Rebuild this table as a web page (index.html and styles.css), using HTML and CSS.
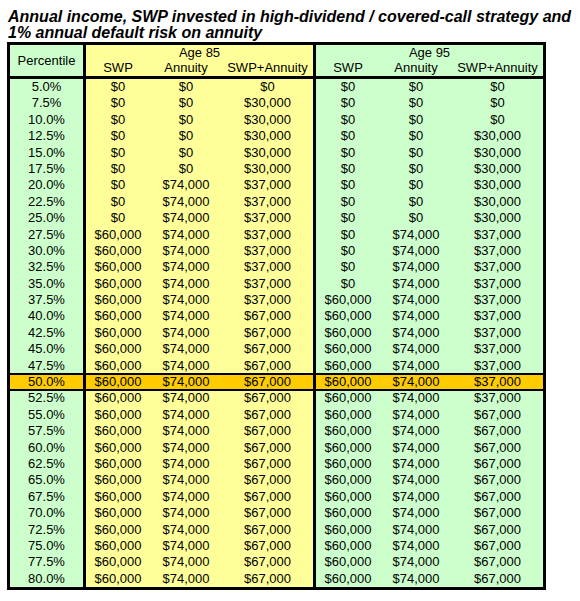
FILE: index.html
```html
<!DOCTYPE html>
<html>
<head>
<meta charset="utf-8">
<link rel="stylesheet" href="styles.css">
</head>
<body>
<h1 class="title"><span class="tl">Annual income, SWP invested in high-dividend / covered-call strategy and</span><span class="tl">1% annual default risk on annuity</span></h1>
<div class="sheet">
  <div class="head">
    <div class="c pct hpct">Percentile</div>
    <div class="group g85">
      <div class="gtitle">Age 85</div>
      <div class="sub"><span class="w1">SWP</span><span class="w2">Annuity</span><span class="w3">SWP+Annuity</span></div>
    </div>
    <div class="group g95">
      <div class="gtitle">Age 95</div>
      <div class="sub"><span class="w1">SWP</span><span class="w2">Annuity</span><span class="w3">SWP+Annuity</span></div>
    </div>
  </div>
  <div class="body">
    <div class="row"><span class="c pct">5.0%</span><span class="c y s1">$0</span><span class="c y">$0</span><span class="c y">$0</span><span class="c g s1">$0</span><span class="c g">$0</span><span class="c g">$0</span></div>
    <div class="row"><span class="c pct">7.5%</span><span class="c y s1">$0</span><span class="c y">$0</span><span class="c y">$30,000</span><span class="c g s1">$0</span><span class="c g">$0</span><span class="c g">$0</span></div>
    <div class="row"><span class="c pct">10.0%</span><span class="c y s1">$0</span><span class="c y">$0</span><span class="c y">$30,000</span><span class="c g s1">$0</span><span class="c g">$0</span><span class="c g">$0</span></div>
    <div class="row"><span class="c pct">12.5%</span><span class="c y s1">$0</span><span class="c y">$0</span><span class="c y">$30,000</span><span class="c g s1">$0</span><span class="c g">$0</span><span class="c g">$30,000</span></div>
    <div class="row"><span class="c pct">15.0%</span><span class="c y s1">$0</span><span class="c y">$0</span><span class="c y">$30,000</span><span class="c g s1">$0</span><span class="c g">$0</span><span class="c g">$30,000</span></div>
    <div class="row"><span class="c pct">17.5%</span><span class="c y s1">$0</span><span class="c y">$0</span><span class="c y">$30,000</span><span class="c g s1">$0</span><span class="c g">$0</span><span class="c g">$30,000</span></div>
    <div class="row"><span class="c pct">20.0%</span><span class="c y s1">$0</span><span class="c y">$74,000</span><span class="c y">$37,000</span><span class="c g s1">$0</span><span class="c g">$0</span><span class="c g">$30,000</span></div>
    <div class="row"><span class="c pct">22.5%</span><span class="c y s1">$0</span><span class="c y">$74,000</span><span class="c y">$37,000</span><span class="c g s1">$0</span><span class="c g">$0</span><span class="c g">$30,000</span></div>
    <div class="row"><span class="c pct">25.0%</span><span class="c y s1">$0</span><span class="c y">$74,000</span><span class="c y">$37,000</span><span class="c g s1">$0</span><span class="c g">$0</span><span class="c g">$30,000</span></div>
    <div class="row"><span class="c pct">27.5%</span><span class="c y s1">$60,000</span><span class="c y">$74,000</span><span class="c y">$37,000</span><span class="c g s1">$0</span><span class="c g">$74,000</span><span class="c g">$37,000</span></div>
    <div class="row"><span class="c pct">30.0%</span><span class="c y s1">$60,000</span><span class="c y">$74,000</span><span class="c y">$37,000</span><span class="c g s1">$0</span><span class="c g">$74,000</span><span class="c g">$37,000</span></div>
    <div class="row"><span class="c pct">32.5%</span><span class="c y s1">$60,000</span><span class="c y">$74,000</span><span class="c y">$37,000</span><span class="c g s1">$0</span><span class="c g">$74,000</span><span class="c g">$37,000</span></div>
    <div class="row"><span class="c pct">35.0%</span><span class="c y s1">$60,000</span><span class="c y">$74,000</span><span class="c y">$37,000</span><span class="c g s1">$0</span><span class="c g">$74,000</span><span class="c g">$37,000</span></div>
    <div class="row"><span class="c pct">37.5%</span><span class="c y s1">$60,000</span><span class="c y">$74,000</span><span class="c y">$37,000</span><span class="c g s1">$60,000</span><span class="c g">$74,000</span><span class="c g">$37,000</span></div>
    <div class="row"><span class="c pct">40.0%</span><span class="c y s1">$60,000</span><span class="c y">$74,000</span><span class="c y">$67,000</span><span class="c g s1">$60,000</span><span class="c g">$74,000</span><span class="c g">$37,000</span></div>
    <div class="row"><span class="c pct">42.5%</span><span class="c y s1">$60,000</span><span class="c y">$74,000</span><span class="c y">$67,000</span><span class="c g s1">$60,000</span><span class="c g">$74,000</span><span class="c g">$37,000</span></div>
    <div class="row"><span class="c pct">45.0%</span><span class="c y s1">$60,000</span><span class="c y">$74,000</span><span class="c y">$67,000</span><span class="c g s1">$60,000</span><span class="c g">$74,000</span><span class="c g">$37,000</span></div>
    <div class="row"><span class="c pct">47.5%</span><span class="c y s1">$60,000</span><span class="c y">$74,000</span><span class="c y">$67,000</span><span class="c g s1">$60,000</span><span class="c g">$74,000</span><span class="c g">$37,000</span></div>
    <div class="row median"><span class="c pct">50.0%</span><span class="c y s1">$60,000</span><span class="c y">$74,000</span><span class="c y">$67,000</span><span class="c g s1">$60,000</span><span class="c g">$74,000</span><span class="c g">$37,000</span></div>
    <div class="row"><span class="c pct">52.5%</span><span class="c y s1">$60,000</span><span class="c y">$74,000</span><span class="c y">$67,000</span><span class="c g s1">$60,000</span><span class="c g">$74,000</span><span class="c g">$37,000</span></div>
    <div class="row"><span class="c pct">55.0%</span><span class="c y s1">$60,000</span><span class="c y">$74,000</span><span class="c y">$67,000</span><span class="c g s1">$60,000</span><span class="c g">$74,000</span><span class="c g">$67,000</span></div>
    <div class="row"><span class="c pct">57.5%</span><span class="c y s1">$60,000</span><span class="c y">$74,000</span><span class="c y">$67,000</span><span class="c g s1">$60,000</span><span class="c g">$74,000</span><span class="c g">$67,000</span></div>
    <div class="row"><span class="c pct">60.0%</span><span class="c y s1">$60,000</span><span class="c y">$74,000</span><span class="c y">$67,000</span><span class="c g s1">$60,000</span><span class="c g">$74,000</span><span class="c g">$67,000</span></div>
    <div class="row"><span class="c pct">62.5%</span><span class="c y s1">$60,000</span><span class="c y">$74,000</span><span class="c y">$67,000</span><span class="c g s1">$60,000</span><span class="c g">$74,000</span><span class="c g">$67,000</span></div>
    <div class="row"><span class="c pct">65.0%</span><span class="c y s1">$60,000</span><span class="c y">$74,000</span><span class="c y">$67,000</span><span class="c g s1">$60,000</span><span class="c g">$74,000</span><span class="c g">$67,000</span></div>
    <div class="row"><span class="c pct">67.5%</span><span class="c y s1">$60,000</span><span class="c y">$74,000</span><span class="c y">$67,000</span><span class="c g s1">$60,000</span><span class="c g">$74,000</span><span class="c g">$67,000</span></div>
    <div class="row"><span class="c pct">70.0%</span><span class="c y s1">$60,000</span><span class="c y">$74,000</span><span class="c y">$67,000</span><span class="c g s1">$60,000</span><span class="c g">$74,000</span><span class="c g">$67,000</span></div>
    <div class="row"><span class="c pct">72.5%</span><span class="c y s1">$60,000</span><span class="c y">$74,000</span><span class="c y">$67,000</span><span class="c g s1">$60,000</span><span class="c g">$74,000</span><span class="c g">$67,000</span></div>
    <div class="row"><span class="c pct">75.0%</span><span class="c y s1">$60,000</span><span class="c y">$74,000</span><span class="c y">$67,000</span><span class="c g s1">$60,000</span><span class="c g">$74,000</span><span class="c g">$67,000</span></div>
    <div class="row"><span class="c pct">77.5%</span><span class="c y s1">$60,000</span><span class="c y">$74,000</span><span class="c y">$67,000</span><span class="c g s1">$60,000</span><span class="c g">$74,000</span><span class="c g">$67,000</span></div>
    <div class="row"><span class="c pct">80.0%</span><span class="c y s1">$60,000</span><span class="c y">$74,000</span><span class="c y">$67,000</span><span class="c g s1">$60,000</span><span class="c g">$74,000</span><span class="c g">$67,000</span></div>
  </div>
</div>
</body>
</html>
```
FILE: styles.css
```css
html, body {
  margin: 0;
  padding: 0;
  background: #fff;
}
body {
  padding: 9px 0 0 7px;
  font-family: "Liberation Sans", Arial, sans-serif;
  color: #000;
}
.title {
  margin: 0 0 1px 1px;
  font-size: 16px;
  line-height: 16px;
  font-weight: bold;
  font-style: italic;
  white-space: nowrap;
}
.tl {
  display: block;
  height: 16px;
}
.sheet {
  width: 533px;
  border: 3px solid #000;
  font-size: 13px;
}
.head {
  display: flex;
  height: 31px;
  border-bottom: 3px solid #000;
}
.c {
  display: block;
  text-align: center;
  box-sizing: border-box;
}
.pct {
  width: 73px;
  background: #ccffcc;
}
.hpct {
  line-height: 31px;
}
.group {
  box-sizing: border-box;
  width: 230px;
  border-left: 3px solid #000;
  display: flex;
  flex-direction: column;
}
.g85 { background: #ffff99; }
.g95 { background: #ccffcc; }
.gtitle {
  text-align: center;
  line-height: 15px;
}
.sub {
  display: flex;
  line-height: 16px;
}
.sub span { text-align: center; }
.w1 { width: 64px; }
.w2 { width: 72px; }
.w3 { width: 91px; }
.row {
  display: flex;
  height: 16.4px;
  line-height: 16.4px;
}
.row .c:nth-child(3), .row .c:nth-child(6) { width: 72px; }
.row .c:nth-child(4), .row .c:nth-child(7) { width: 91px; }
.s1 {
  width: 67px;
  border-left: 3px solid #000;
}
.y { background: #ffff99; }
.g { background: #ccffcc; }
.row.median {
  position: relative;
}
.row.median .c { background: #ffcc00; }
.row.median::before,
.row.median::after {
  content: "";
  position: absolute;
  left: 0;
  right: 0;
  height: 2px;
  background: #000;
}
.row.median::before { top: -1px; }
.row.median::after { bottom: -1px; }
```
